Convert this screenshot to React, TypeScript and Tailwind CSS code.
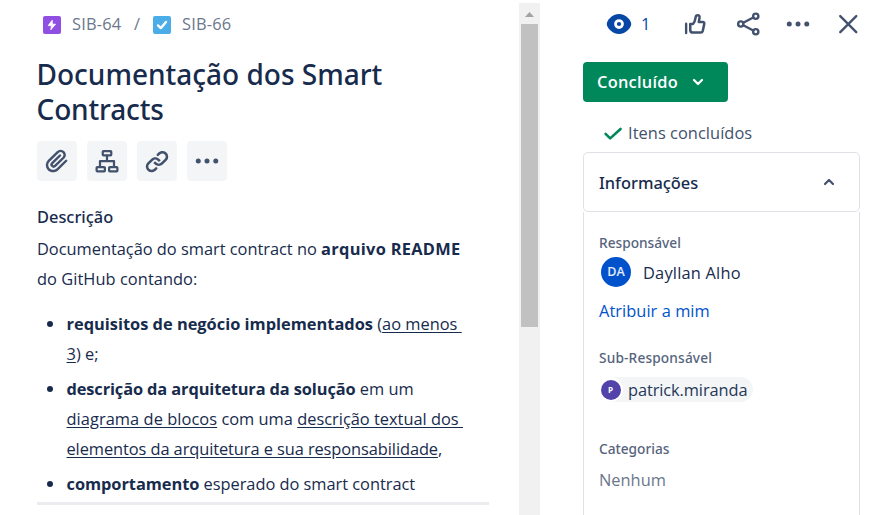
import type { ReactNode } from 'react';

function Glyph({ className = '', children }: { className?: string; children: ReactNode }) {
  return (
    <svg viewBox="0 0 24 24" className={`size-[30px] shrink-0 ${className}`} fill="none" stroke="currentColor" strokeLinecap="round" strokeLinejoin="round">
      {children}
    </svg>
  );
}

function Dots() {
  return (
    <Glyph>
      <g fill="currentColor" stroke="none">
        <circle cx="5" cy="12" r="2" />
        <circle cx="12" cy="12" r="2" />
        <circle cx="19" cy="12" r="2" />
      </g>
    </Glyph>
  );
}

function ToolButton({ children }: { children: ReactNode }) {
  return (
    <button className="flex size-10 items-center justify-center rounded bg-[#f4f5f7] text-[#42526e]">{children}</button>
  );
}

function Breadcrumbs() {
  return (
    <nav className="flex h-[49px] items-center pl-1.5 text-[16.4px] tracking-[0.2px] text-[#6b778c]">
      <svg viewBox="0 0 18 18" className="mr-[11px] size-[18px]">
        <rect width="18" height="18" rx="2" fill="#904ee2" />
        <path d="M9.2 4.2 5.2 9.6h3.2l-.6 4.2 4.8-5.6H9.4z" fill="#fff" stroke="#fff" strokeWidth=".8" strokeLinejoin="round" />
      </svg>
      <span className="w-[62px]">SIB-64</span>
      <span className="w-[19px]">/</span>
      <svg viewBox="0 0 18 18" className="mr-[11px] size-[18px]">
        <rect width="18" height="18" rx="2" fill="#4bade8" />
        <path d="m5 9.4 2.8 2.7L13 6" fill="none" stroke="#fff" strokeWidth="2.4" strokeLinecap="round" strokeLinejoin="round" />
      </svg>
      <span>SIB-66</span>
    </nav>
  );
}

function Item({ children }: { children: ReactNode }) {
  return (
    <li className="flex">
      <span className="mt-3 mr-[13.5px] ml-[10px] size-1.5 shrink-0 rounded-full bg-[#172b4d]" />
      <div>{children}</div>
    </li>
  );
}

function IssueContent() {
  return (
    <main className="h-[515px] w-[519px] pl-[37px] whitespace-nowrap">
      <Breadcrumbs />
      <h1 className="mt-2 -ml-[0.5px] font-['Noto_Sans',sans-serif] text-[28px] leading-[35px] font-medium">
        Documentação dos Smart
        <br />
        <span className="tracking-[-0.15px]">Contracts</span>
      </h1>
      <div className="mt-[14px] flex gap-2.5">
        <ToolButton>
          <Glyph>
            <path
              fill="currentColor"
              stroke="none"
              d="M11.643 17.965c-1.53 1.495-4.016 1.496-5.542.004a3.773 3.773 0 01.002-5.412l7.147-6.985a2.316 2.316 0 013.233-.003c.893.873.895 2.282.004 3.153l-6.703 6.55a.653.653 0 01-.914-.008.62.62 0 010-.902l6.229-6.087a.941.941 0 000-1.353.995.995 0 00-1.384 0l-6.23 6.087a2.502 2.502 0 000 3.607 2.643 2.643 0 003.683.009l6.703-6.55a4.074 4.074 0 00-.003-5.859 4.306 4.306 0 00-6.002.003l-7.148 6.985a5.655 5.655 0 00-.001 8.118c2.29 2.237 6.015 2.238 8.304 0l7.005-6.844a.94.94 0 000-1.353.995.995 0 00-1.384 0l-7 6.84z"
            />
          </Glyph>
        </ToolButton>
        <ToolButton>
          <Glyph>
            <g strokeWidth="1.8">
              <rect x="8.6" y="4" width="6.8" height="3.4" rx=".6" />
              <rect x="3.7" y="16.8" width="6.6" height="3.4" rx=".6" />
              <rect x="13.7" y="16.8" width="6.6" height="3.4" rx=".6" />
              <path d="M12 7.6V12M6.4 16.4V12h11.2v4.4" />
            </g>
          </Glyph>
        </ToolButton>
        <ToolButton>
          <Glyph>
            <g fill="currentColor" stroke="none">
              <path d="M12.856 5.457l-.937.92a1.002 1.002 0 000 1.437 1.047 1.047 0 001.463 0l.984-.966c.967-.95 2.542-1.135 3.602-.288a2.54 2.54 0 01.203 3.81l-2.903 2.852a2.646 2.646 0 01-3.696 0l-1.11-1.09L9 13.57l1.108 1.089c1.822 1.788 4.802 1.788 6.622 0l2.905-2.852a4.558 4.558 0 00-.357-6.82c-1.893-1.517-4.695-1.226-6.422.47" />
              <path d="M11.144 19.543l.937-.92a1.002 1.002 0 000-1.437 1.047 1.047 0 00-1.462 0l-.985.966c-.967.95-2.542 1.135-3.602.288a2.54 2.54 0 01-.203-3.81l2.903-2.852a2.646 2.646 0 013.696 0l1.11 1.09L15 11.43l-1.108-1.089c-1.822-1.788-4.802-1.788-6.622 0l-2.905 2.852a4.558 4.558 0 00.357 6.82c1.893 1.517 4.695 1.226 6.422-.47" />
            </g>
          </Glyph>
        </ToolButton>
        <ToolButton>
          <Dots />
        </ToolButton>
      </div>
      <h2 className="mt-[26px] font-['Noto_Sans',sans-serif] text-[16.4px] leading-5 font-medium">Descrição</h2>
      <div className="mt-[7px] text-[16.4px] leading-[30px]">
        <p>
          <span className="tracking-[-0.02px]">Documentação do smart contract no </span>
          <b className="tracking-[0.3px]">arquivo README</b>
          <br />
          <span className="tracking-[0.05px]">do GitHub contando:</span>
        </p>
        <ul className="mt-[15px] flex flex-col gap-[5px]">
          <Item>
            <b>requisitos de negócio implementados</b> (<u className="whitespace-pre underline-offset-2">ao menos </u>
            <br />
            <u className="underline-offset-2">3</u>) e;
          </Item>
          <Item>
            <b className="tracking-[-0.12px]">descrição da arquitetura da solução</b> em um
            <br />
            <u className="tracking-[0.06px] underline-offset-2">diagrama de blocos</u> com uma{' '}
            <u className="whitespace-pre underline-offset-2">descrição textual dos </u>
            <br />
            <u className="tracking-[-0.08px] underline-offset-2">elementos da arquitetura e sua responsabilidade</u>,
          </Item>
          <Item>
            <b className="tracking-[-0.05px]">comportamento</b>
            <span className="tracking-[-0.03px]"> esperado do smart contract</span>
          </Item>
        </ul>
      </div>
      <div className="mt-[3px] h-[3px] w-[452px] bg-[#ebecf0]" />
    </main>
  );
}

function Scrollbar() {
  return (
    <div className="mt-[3px] flex h-[512px] w-[21px] flex-col items-center bg-[#f1f1f1]">
      <svg viewBox="0 0 21 21" className="h-[21px] w-[21px]">
        <path d="M6 14h9l-4.5-5z" fill="#a3a3a3" />
      </svg>
      <div className="h-[303px] w-[17px] bg-[#c1c1c1]" />
    </div>
  );
}

function Actions() {
  return (
    <div className="flex h-12 shrink-0 items-center pl-[21px] text-[#42526e]">
      <Glyph className="text-[#0747a6]">
        <path d="M12 4C6.5 4 2.2 9.2 2.2 12S6.5 20 12 20s9.8-5.2 9.8-8S17.5 4 12 4z" fill="currentColor" stroke="none" />
        <circle cx="12" cy="12" r="2.8" stroke="#fff" strokeWidth="2.2" />
      </Glyph>
      <span className="mt-px w-[46px] shrink-0 pl-[7px] text-[16.4px] text-[#0747a6]">1</span>
      <Glyph>
        <path d="M4.900 11.800v7.400" strokeWidth="1.9" />
        <path
          d="M8.2 12h2.2c1.3-1.4 1.8-3.2 2.1-5.3.2-1.3.8-1.8 1.6-1.8 1.2 0 1.8.9 1.5 2.3L15 10.4h3.3c.8 0 1.3.6 1.100 1.500l-1.200 5.700c-.2.9-.8 1.300-1.700 1.300h-6.100c-1.300 0-2.200-.8-2.200-2.100z"
          strokeWidth="2"
        />
      </Glyph>
      <Glyph className="ml-[23px]">
        <g strokeWidth="1.9">
          <circle cx="6.2" cy="12" r="2.1" />
          <circle cx="18.2" cy="5.8" r="2.1" />
          <circle cx="18.2" cy="18.2" r="2.1" />
          <path d="m8.2 11 8-4.2M8.2 13l8 4.2" />
        </g>
      </Glyph>
      <span className="ml-5">
        <Dots />
      </span>
      <Glyph className="ml-5">
        <path d="m5.8 5.7 12.8 12.8M18.6 5.7l-12.8 12.8" strokeWidth="1.9" />
      </Glyph>
    </div>
  );
}

function Label({ children }: { children: ReactNode }) {
  return <div className="font-['Noto_Sans',sans-serif] text-[13.7px] leading-5 font-medium text-[#56647d]">{children}</div>;
}

function Sidebar() {
  return (
    <aside className="ml-[43px] flex h-[515px] w-[277px] flex-col whitespace-nowrap">
      <Actions />
      <button className="mt-[14px] flex h-10 w-[145px] shrink-0 items-center rounded bg-[#00875a] pl-[14px] text-[16.4px] font-semibold tracking-[0.25px] text-white">
        Concluído
        <svg viewBox="0 0 12 8" className="ml-[14px] h-2 w-3" fill="none" stroke="currentColor" strokeWidth="2.2" strokeLinecap="round" strokeLinejoin="round">
          <path d="m2 2 4 4 4-4" />
        </svg>
      </button>
      <div className="mt-[21px] flex h-5 shrink-0 items-center pl-[21px] text-[16.4px] text-[#42526e]">
        <svg viewBox="0 0 18 13" className="mr-1.5 h-[13px] w-[18px]" fill="none" stroke="#00875a" strokeWidth="2.6" strokeLinecap="round" strokeLinejoin="round">
          <path d="m1.6 6.8 4.6 4.6L16.5 2" />
        </svg>
        <span className="tracking-[0.05px]">Itens concluídos</span>
      </div>
      <div className="mt-[9px] flex h-[60px] shrink-0 items-center justify-between rounded-[5px] border border-[#dfe1e6] pr-6 pl-[15px] font-['Noto_Sans',sans-serif] text-[16.4px] font-medium">
        <span className="mt-[2px]">Informações</span>
        <svg viewBox="0 0 12 8" className="h-2 w-3" fill="none" stroke="#42526e" strokeWidth="2.2" strokeLinecap="round" strokeLinejoin="round">
          <path d="m2 6 4-4 4 4" />
        </svg>
      </div>
      <div className="grow border-x border-[#dfe1e6] pl-[15px] text-[16.4px] leading-5">
        <div className="pt-[21px]">
          <Label>Responsável</Label>
        </div>
        <div className="mt-1 flex h-[30px] items-center pl-[2px]">
          <span className="flex size-[30px] items-center justify-center rounded-full bg-[#0052cc] text-[12.5px] font-semibold text-white/90">DA</span>
          <span className="mt-px ml-3 tracking-[0.2px]">Dayllan Alho</span>
        </div>
        <div className="mt-[14px] tracking-[0.05px] text-[#0052cc]">Atribuir a mim</div>
        <div className="mt-[27px]">
          <Label>
            <span className="tracking-[0.15px]">Sub-Responsável</span>
          </Label>
        </div>
        <div className="mt-[9px] -ml-px flex h-[25px] w-[155px] items-center rounded-full bg-[#f4f5f7] text-[#253858]">
          <span className="flex size-[25px] items-center justify-center rounded-full bg-white">
            <span className="flex size-5 items-center justify-center rounded-full bg-[#5243aa] text-[8px] font-bold text-white">P</span>
          </span>
          <span className="ml-[5px] tracking-[-0.1px]">patrick.miranda</span>
        </div>
        <div className="mt-[37px]">
          <Label>Categorias</Label>
        </div>
        <div className="mt-[11px] text-[#6b778c]">Nenhum</div>
      </div>
    </aside>
  );
}

export default function App() {
  return (
    <div className="flex h-[515px] w-[877px] overflow-hidden bg-white font-['Open_Sans',sans-serif] text-[#172b4d]">
      <IssueContent />
      <Scrollbar />
      <Sidebar />
    </div>
  );
}
